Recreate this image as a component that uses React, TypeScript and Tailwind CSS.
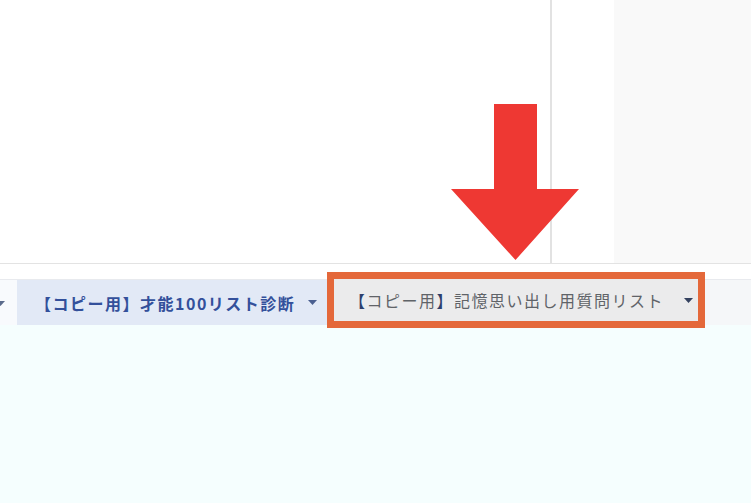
import React from "react";

const font = {
  fontFamily: '"Noto Sans CJK JP", "Noto Sans", sans-serif',
};

function Caret({ className }: { className: string }) {
  return (
    <svg width="9" height="5" viewBox="0 0 9 5" className={className}>
      <path d="M0 0 L9 0 L4.5 5 Z" fill="currentColor" />
    </svg>
  );
}

function DownArrow() {
  return (
    <svg
      className="absolute left-0 top-0 pointer-events-none"
      width="751"
      height="503"
      viewBox="0 0 751 503"
    >
      <path
        d="M494 104 L537 104 L537 189 L579 189 L515.5 260 L451 189 L494 189 Z"
        fill="#ee3833"
      />
    </svg>
  );
}

export default function App() {
  return (
    <div className="relative w-[751px] h-[503px] overflow-hidden bg-white" style={font}>
      <div className="flex h-[264px] border-b border-[#e3e3e3]">
        <div className="w-[552px] border-r-2 border-[#e2e2e2] bg-white" />
        <div className="w-[62px] bg-white" />
        <div className="flex-1 bg-[#f9f9f9]" />
      </div>
      <div className="h-[15px] bg-white" />
      <div className="flex h-[46px] bg-[#f5f7fa] border-t border-[#e8eaee]">
        <div className="relative w-[17px] bg-[#f8fafd] overflow-hidden">
          <Caret className="absolute -left-[4px] top-[21px] text-[#5b6b8c]" />
        </div>
        <div className="flex items-center w-[310px] bg-[#e2e9f6] pl-[18px]">
          <span className="text-[16px] tracking-[1.5px] font-semibold text-[#33509b] whitespace-nowrap">
            【コピー用】才能100リスト診断
          </span>
          <Caret className="ml-[13px] text-[#4a5f90]" />
        </div>
        <div className="flex items-center h-[56px] -mt-[8px] w-[378px] border-[7px] border-[#e4683a] bg-[#ebebec] pl-[15px]">
          <span className="text-[16px] tracking-[1.5px] text-[#5f6368] whitespace-nowrap">
            <span className="text-[#2d3f6c]">【</span>コピー用
            <span className="text-[#2d3f6c]">】</span>記憶思い出し用質問リスト
          </span>
          <Caret className="ml-[20px] text-[#34415f]" />
        </div>
        <div className="flex-1 bg-[#f5f7f9]" />
      </div>
      <div className="h-[178px] bg-[#f5fefe]" />
      <DownArrow />
    </div>
  );
}
